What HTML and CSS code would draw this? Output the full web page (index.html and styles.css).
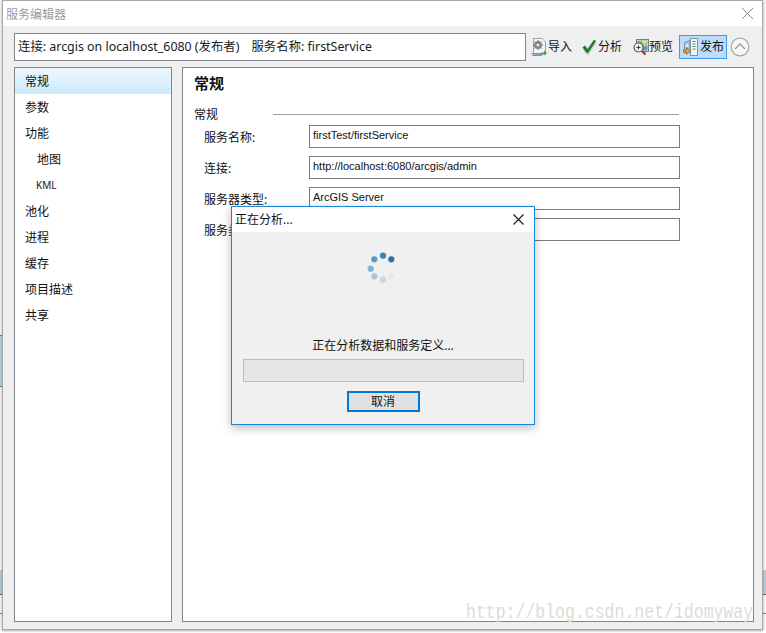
FILE: index.html
```html
<!DOCTYPE html>
<html lang="zh">
<head>
<meta charset="utf-8">
<title>服务编辑器</title>
<link rel="stylesheet" href="styles.css">
</head>
<body>
<div class="desktop">
  <div class="back back-a"></div>
  <div class="back back-b"></div>
  <div class="back back-c"></div>
  <div class="back back-d"></div>

  <section class="window">
    <header class="titlebar">
      <span class="title">服务编辑器</span>
      <svg class="win-close" width="13" height="13" viewBox="0 0 13 13"><path d="M1 1 L12 12 M12 1 L1 12" stroke="#8c8c8c" stroke-width="1" fill="none"/></svg>
    </header>

    <div class="toolbar">
      <div class="infobox"><span class="conn">连接: arcgis on localhost_6080 (发布者)</span><span>服务名称: firstService</span></div>
      <div class="tools">
        <div class="tool tool-import">
          <svg width="16" height="20" viewBox="0 0 16 20">
            <path d="M2.5 1.5 H11 L14.5 5 V17.5 H2.5 Z" fill="#f4f7fa" stroke="#8ba3b8"/>
            <circle cx="7" cy="8" r="4" fill="#8d8d8d"/>
            <path d="M7 3 V13 M2 8 H12 M3.5 4.5 L10.5 11.5 M10.5 4.5 L3.5 11.5" stroke="#777" stroke-width="1"/>
            <circle cx="7" cy="8" r="1.6" fill="#e6e6e6"/>
            <path d="M0.5 16.5 H12 M1 18.5 H11" stroke="#7a93a8"/>
            <path d="M10 15.5 H13 V13.5 L16 16 L13 18.5 V16.8 H10 Z" fill="#4aa04a"/>
          </svg>
          <span>导入</span>
        </div>
        <div class="tool tool-check">
          <svg width="15" height="16" viewBox="0 0 15 16">
            <path d="M1 9.5 L3.5 7.5 L6 11 L12.5 1.5 L14.5 2.5 L6.5 15 L5 15 Z" fill="#c9c9c9" transform="translate(0 1)"/>
            <path d="M0.5 8.5 L3 6.5 L5.5 10 L12 0.8 L14 2 L6 14 L4.8 14 Z" fill="#1f7a2c"/>
          </svg>
          <span>分析</span>
        </div>
        <div class="tool tool-preview">
          <svg width="16" height="18" viewBox="0 0 16 18">
            <rect x="3.5" y="1.5" width="12" height="12" fill="#dfe8ea" stroke="#6f7f88"/>
            <path d="M4.5 2.5 H14.5 V6 L9 9 H4.5 Z" fill="#8cc06a"/>
            <path d="M9 3 H14 L11.5 7.5 Z" fill="#e9e08a"/>
            <path d="M9.5 9 L14.5 7 V12.5 H9.5 Z" fill="#5a9fc4"/>
            <circle cx="5.5" cy="9.5" r="4.5" fill="#f4f4f4" stroke="#555" stroke-width="1.2"/>
            <path d="M3.5 9.5 H7.5 M5.5 7.5 V11.5" stroke="#333" stroke-width="1"/>
            <path d="M9 13 L12.5 16.5" stroke="#a23a2a" stroke-width="2.2"/>
          </svg>
          <span>预览</span>
        </div>
        <div class="tool tool-publish">
          <svg width="15" height="18" viewBox="0 0 15 18">
            <path d="M1.5 4.5 L7 2.5 V14 L1.5 15 Z" fill="#a8c4da" stroke="#7d93a8"/>
            <rect x="7.5" y="0.5" width="7" height="17" fill="#eef3f7" stroke="#7d93a8"/>
            <path d="M9.5 3.5 H12.5 M9.5 6 H12.5" stroke="#5a7a94"/>
            <path d="M9.5 8.5 H12.5 M9.5 11 H12.5" stroke="#4aa04a"/>
            <circle cx="4" cy="7.5" r="1.6" fill="#dff0f4"/>
            <path d="M0 12 H3.5 V9.5 L7.5 13 L3.5 16.5 V14.2 H0 Z" fill="#d9b23a" stroke="#7a6420" stroke-width=".7"/>
          </svg>
          <span>发布</span>
        </div>
        <svg class="collapse" width="20" height="20" viewBox="0 0 20 20">
          <circle cx="10" cy="10" r="8.8" fill="#f7f7f7" stroke="#a8a8a8" stroke-width="1.2"/>
          <path d="M5 12 L10 7 L15 12" fill="none" stroke="#9a9a9a" stroke-width="1.4"/>
        </svg>
      </div>
    </div>

    <div class="main">
      <nav class="nav">
        <div class="nav-item selected">常规</div>
        <div class="nav-item">参数</div>
        <div class="nav-item">功能</div>
        <div class="nav-item sub">地图</div>
        <div class="nav-item sub kml">KML</div>
        <div class="nav-item">池化</div>
        <div class="nav-item">进程</div>
        <div class="nav-item">缓存</div>
        <div class="nav-item">项目描述</div>
        <div class="nav-item">共享</div>
      </nav>
      <main class="panel">
        <h1 class="panel-title">常规</h1>
        <div class="group-head">
          <span>常规</span>
          <i class="group-line"></i>
        </div>
        <div class="form">
          <label class="row"><span class="row-label">服务名称:</span><span class="field">firstTest/firstService</span></label>
          <label class="row"><span class="row-label">连接:</span><span class="field">http://localhost:6080/arcgis/admin</span></label>
          <label class="row"><span class="row-label">服务器类型:</span><span class="field">ArcGIS Server</span></label>
          <label class="row"><span class="row-label">服务类型:</span><span class="field"></span></label>
        </div>
      </main>
    </div>
  </section>

  <div class="watermark">http://blog.csdn.net/idomyway</div>

  <section class="dialog">
    <header class="dialog-title">
      <span class="dialog-caption">正在分析...</span>
      <svg width="13" height="13" viewBox="0 0 13 13"><path d="M1.5 1.5 L11.5 11.5 M11.5 1.5 L1.5 11.5" stroke="#1a1a1a" stroke-width="1.1" fill="none"/></svg>
    </header>
    <div class="dialog-body">
      <svg class="spinner" width="30" height="32" viewBox="0 0 30 32">
        <circle cx="24.3" cy="8.3" r="3.1" fill="#2475ad"/>
        <circle cx="16" cy="4.7" r="3.1" fill="#3a85b8"/>
        <circle cx="7.3" cy="8.3" r="3.1" fill="#5a98c3"/>
        <circle cx="3.7" cy="17.7" r="3.1" fill="#85b2d0"/>
        <circle cx="7.3" cy="25.3" r="3.1" fill="#a9c6da"/>
        <circle cx="16" cy="28.7" r="3.1" fill="#c5d8e5"/>
        <circle cx="24.3" cy="25.3" r="3.1" fill="#e0e9ef"/>
      </svg>
      <p class="message">正在分析数据和服务定义...</p>
      <div class="progress"></div>
      <button class="cancel" type="button">取消</button>
    </div>
  </section>
</div>
</body>
</html>
```

FILE: styles.css
```css
* { box-sizing: border-box; }
html, body { margin: 0; padding: 0; }
body {
  width: 766px;
  height: 633px;
  overflow: hidden;
  background: #fff;
  font-family: "Noto Sans", "Noto Sans CJK SC", sans-serif;
  font-size: 12px;
  color: #111;
}
.desktop { position: relative; width: 766px; height: 633px; background: #f4f4f4; }

.back { position: absolute; left: 0; width: 766px; }
.back-a { top: 335px; width: 2px; height: 52px; background: #b9d2e2; border-top: 1px solid #2f8f86; border-bottom: 1px solid #2f8f86; }
.back-b { top: 570px; height: 25px; background: #b7cbdb; border-bottom: 1px solid #666; }
.back-c { top: 613px; height: 1px; background: #777; }
.back-d { top: 630px; height: 3px; background: #fff; }

.window {
  position: absolute;
  left: 2px;
  top: 0;
  width: 761px;
  height: 630px;
  display: flex;
  flex-direction: column;
  background: #efefef;
  border: 1px solid #a9a9a9;
  box-shadow: 0 1px 2px rgba(0,0,0,.35);
}
.titlebar {
  height: 25px;
  flex: none;
  background: #fff;
  display: flex;
  align-items: center;
  justify-content: space-between;
  padding: 0 8px 0 3px;
}
.title { color: #9c9c9c; }

.toolbar {
  flex: none;
  display: flex;
  align-items: flex-start;
  padding: 7px 0 0 11px;
  height: 41px;
}
.infobox {
  width: 512px;
  height: 28px;
  background: #fff;
  border: 1px solid #84848f;
  font-size: 12.4px;
  line-height: 26px;
  padding-left: 3px;
  white-space: nowrap;
  color: #1a1a1a;
}
.conn { margin-right: 12px; }
.tools { display: flex; align-items: center; height: 28px; padding-left: 5px; }
.tool { display: flex; align-items: center; height: 24px; white-space: nowrap; }
.tool span { line-height: 24px; }
.tool-import { width: 51px; gap: 1px; }
.tool-check { width: 51px; gap: 1px; }
.tool-preview { width: 46px; gap: 0; }
.tool-publish {
  width: 48px;
  gap: 2px;
  padding-left: 3px;
  background: #bcdcfb;
  border: 1px solid #3d9bf0;
}
.collapse { margin-left: 3px; }

.main { flex: 1; display: flex; padding: 0 8px 7px 11px; gap: 10px; min-height: 0; }
.nav {
  width: 158px;
  background: #fff;
  border: 1px solid #84848f;
}
.nav-item { height: 26px; line-height: 27px; padding-left: 10px; }
.nav-item.sub { padding-left: 22px; }
.nav-item.kml { font-size: 10px; padding-left: 21px; }
.nav-item.selected { background: linear-gradient(#eff8fe, #cdeafb); }

.panel {
  flex: 1;
  background: #fff;
  border: 1px solid #84848f;
  padding: 0 0 0 11px;
}
.panel-title { margin: 0; height: 30px; line-height: 30px; font-size: 15px; font-weight: 700; }
.group-head {
  display: flex;
  align-items: center;
  height: 27px;
  padding-top: 4px;
}
.group-head span { width: 79px; flex: none; }
.group-line { display: block; width: 406px; height: 1px; margin-top: 2px; background: #a0a0a0; }
.form { display: flex; flex-direction: column; gap: 8px; padding: 0 0 0 10px; }
.row { display: flex; align-items: center; height: 23px; }
.row-label { width: 105px; flex: none; }
.field {
  width: 371px;
  height: 23px;
  border: 1px solid #7a7a7a;
  background: #fff;
  font-family: "Liberation Sans", sans-serif;
  font-size: 11px;
  line-height: 18px;
  padding-left: 3px;
  white-space: nowrap;
}

.watermark {
  position: absolute;
  left: 466px;
  top: 601px;
  width: 349px;
  font-family: "Liberation Mono", monospace;
  font-size: 20px;
  line-height: 23px;
  color: #dcdcd6;
  transform: scaleX(.825);
  transform-origin: left top;
  white-space: nowrap;
}

.dialog {
  position: absolute;
  left: 231px;
  top: 206px;
  width: 304px;
  height: 219px;
  background: #f0f0f0;
  border: 1px solid #1a86d8;
  box-shadow: 0 3px 9px rgba(0,0,0,.28);
  display: flex;
  flex-direction: column;
}
.dialog-title {
  flex: none;
  height: 25px;
  background: #fff;
  display: flex;
  align-items: center;
  justify-content: space-between;
  padding: 0 9px 0 3px;
}
.dialog-caption { margin-bottom: 2px; }
.dialog-body { flex: 1; display: flex; flex-direction: column; align-items: center; }
.spinner { flex: none; margin: 19px 0 0 -3px; }
.message { margin: 53px 0 0; height: 20px; line-height: 20px; text-align: center; white-space: nowrap; }
.progress { width: 281px; height: 23px; margin-top: 3px; background: #e6e6e6; border: 1px solid #bcbcbc; }
.cancel {
  width: 73px;
  height: 21px;
  margin-top: 9px;
  padding: 0;
  background: #e1e1e1;
  border: 2px solid #0078d7;
  font: inherit;
  line-height: 17px;
  color: #111;
}
```
